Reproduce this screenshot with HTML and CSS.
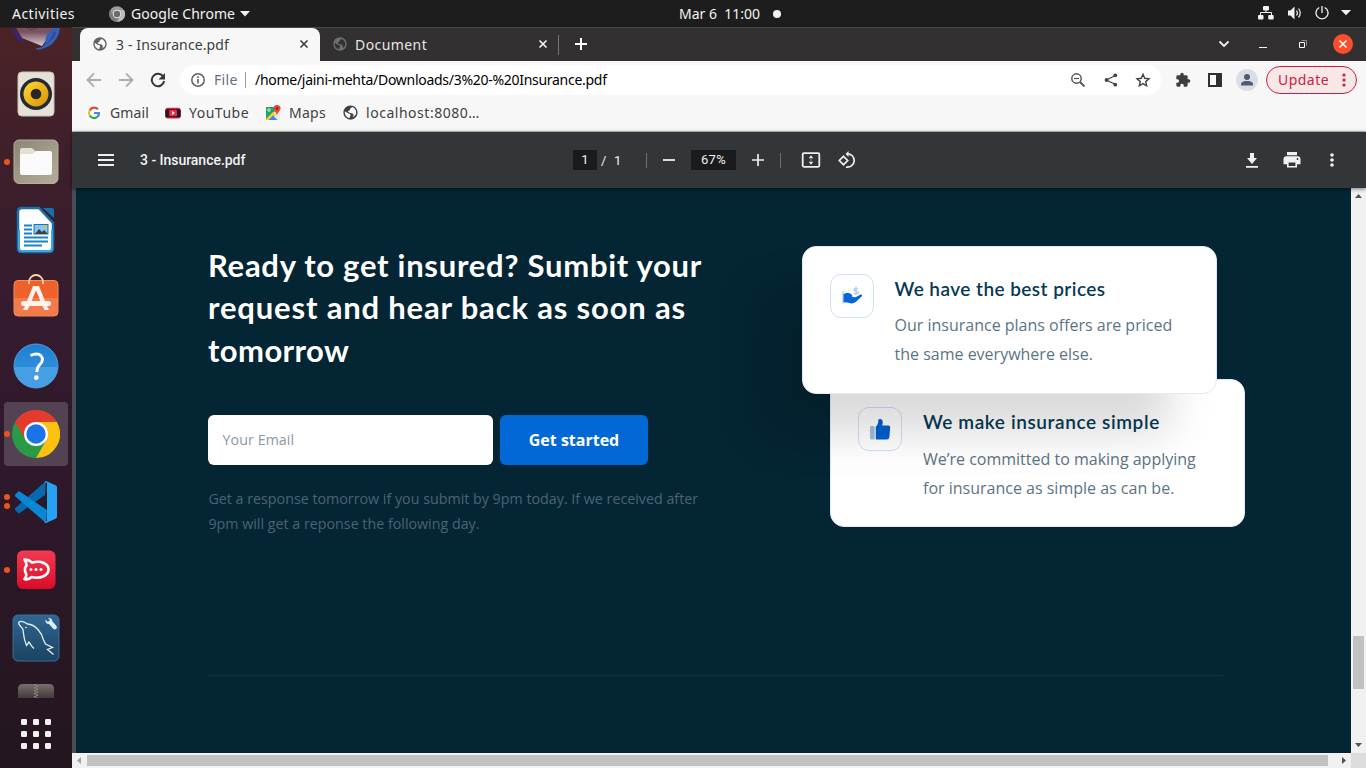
FILE: index.html
```html
<!DOCTYPE html>
<html lang="en">
<head>
<meta charset="utf-8">
<title>3 - Insurance.pdf</title>
<link rel="stylesheet" href="styles.css">
</head>
<body>
<svg width="0" height="0" class="defs">
  <defs>
    <linearGradient id="speaker" x1="0" y1="0" x2="1" y2="1"><stop offset="0" stop-color="#ffd92e"/><stop offset="1" stop-color="#d9900a"/></linearGradient>
    <linearGradient id="files" x1="0" y1="0" x2="1" y2="1"><stop offset="0" stop-color="#8e8674"/><stop offset="1" stop-color="#b3ad9c"/></linearGradient>
    <linearGradient id="bag" x1="0" y1="0" x2="0" y2="1"><stop offset=".5" stop-color="#f0602a"/><stop offset=".5" stop-color="#f27a4b"/></linearGradient>
    <linearGradient id="help" x1="0" y1="0" x2="0" y2="1"><stop offset="0" stop-color="#1e7fd2"/><stop offset=".53" stop-color="#2e8dda"/><stop offset=".53" stop-color="#479fe3"/></linearGradient>
    <linearGradient id="rocket" x1="0" y1="0" x2="0" y2="1"><stop offset="0" stop-color="#f23a52"/><stop offset="1" stop-color="#db0c28"/></linearGradient>
    <linearGradient id="mysql" x1="0" y1="0" x2="0" y2="1"><stop offset="0" stop-color="#2f6793"/><stop offset="1" stop-color="#1c4260"/></linearGradient>
    <linearGradient id="drive" x1="0" y1="0" x2="0" y2="1"><stop offset="0" stop-color="#77706b"/><stop offset="1" stop-color="#423a3c"/></linearGradient>
    <linearGradient id="bird" x1="0" y1="0" x2="0" y2="1"><stop offset=".3" stop-color="#7a5260"/><stop offset="1" stop-color="#d6ccd4"/></linearGradient>
    <symbol id="globe" viewBox="0 0 24 24"><path fill="currentColor" d="M12 2C6.480 2 2 6.480 2 12s4.480 10 10 10 10-4.480 10-10S17.520 2 12 2zm-1 17.930c-3.950-.49-7-3.850-7-7.930 0-.62.080-1.210.210-1.790L9 13.500c2 0 3 .6 3 2.300 0 1-.5 1.700-1 2.200v1.930zm3.200-1.400c2-.9 2.300-2.100 2-3.300-.5-1.700-2-2.700-4-2.700-1.500 0-3-.4-3.500-1.500-.4-1.300.6-2 2-2.100.8-.2.600-1.400.5-1.930C12.200 6 13 5.500 14.300 4.400c3.400 1 5.700 4.060 5.700 7.600 0 3.300-2 5.900-5.800 6.530z"/></symbol>
  </defs>
</svg>

<div class="desktop">
  <header class="topbar">
    <div class="topbar-left">
      <span class="activities">Activities</span>
      <svg class="chrome-mono" width="16" height="16" viewBox="0 0 16 16"><circle cx="8" cy="8" r="7.800" fill="#9a9a9a"/><path d="M8 4h7a7.800 7.800 0 0 1-7 11.800L11.500 10z" fill="#bcbcbc"/><path d="M4.500 10 1.300 4A7.800 7.800 0 0 0 8 15.800L10 11z" fill="#7d7d7d"/><circle cx="8" cy="8" r="4.200" fill="#e4e4e4"/><circle cx="8" cy="8" r="3.200" fill="#6b6b6b"/></svg>
      <span class="app-name">Google Chrome</span>
      <svg width="10" height="6" viewBox="0 0 10 6"><path d="M0 0h10L5 5.500z" fill="#f2f2f2"/></svg>
    </div>
    <div class="clock"><span class="clock-text">Mar 6&nbsp; 11:00</span><i class="clock-dot"></i></div>
    <div class="tray">
      <svg width="16" height="14" viewBox="0 0 16 14" fill="#f2f2f2"><rect x="5" y="0" width="6" height="4.500" rx="1"/><rect x="0" y="9" width="5.500" height="4.500" rx="1"/><rect x="10.200" y="9" width="5.500" height="4.500" rx="1"/><path d="M2.500 9V6.500h11V9M8 4v3" fill="none" stroke="#f2f2f2"/></svg>
      <svg width="16" height="14" viewBox="0 0 16 14"><path d="M1 4.500h2.500L7.500.500v13l-4-4H1z" fill="#f2f2f2"/><path d="M9.500 4.500q1.800 2.500 0 5M11.500 2.500q3.400 4.500 0 9" fill="none" stroke="#f2f2f2" stroke-width="1.200"/></svg>
      <svg width="14" height="14" viewBox="0 0 14 14"><path d="M4.300 1.500a6 6 0 1 0 5.400 0M7 0v7" fill="none" stroke="#f2f2f2" stroke-width="1.300"/></svg>
      <svg width="10" height="6" viewBox="0 0 10 6"><path d="M0 0h10L5 5.300z" fill="#f2f2f2"/></svg>
    </div>
  </header>

  <div class="main">
    <nav class="dock">
      <div class="dock-apps">
        <div class="app"><svg width="48" height="48" viewBox="0 0 48 48"><path d="M3 24h40l-8 13-5 7-20-8z" fill="url(#bird)"/><path d="M0 24c1 9 6 15 12 18l1-1C8 36 8 32 4 28z" fill="#33257c"/><path d="M48 24c0 12-8 22-23 24l-1-2c5 0 7-1 9-4l1-7c1-4 3-5 6-7l3-4z" fill="#2f62b8"/><path d="M42 29c-2 7-6 12-12 15 5-2 11-6 14-13z" fill="#4b3a9a"/><path d="m14 25 5 3 8-3" fill="none" stroke="#5e3c48"/></svg></div>
        <div class="app"><svg width="48" height="48" viewBox="0 0 48 48"><rect x="6" y="2" width="36" height="44" rx="4" fill="#e6e2d8" stroke="#c9c4b8"/><circle cx="24" cy="24" r="16" fill="#252a36"/><circle cx="24" cy="24" r="12.500" fill="url(#speaker)"/><circle cx="24" cy="24" r="5.300" fill="#272727"/></svg></div>
        <div class="app"><i class="dots one"></i><svg width="48" height="48" viewBox="0 0 48 48"><rect x="2" y="2" width="44" height="43.500" rx="5" fill="url(#files)" stroke="#b5ae9d"/><path d="M8 24V12q0-2 2-2h10l4 4v10z" fill="#e2dfd3"/><path d="M8 18q0-2 2-2h10l4-3h14q2 0 2 2v20q0 2-2 2H10q-2 0-2-2z" fill="#fafafa"/></svg></div>
        <div class="app"><svg width="48" height="48" viewBox="0 0 48 48"><path d="M10 2h17l14 15v25q0 4-4 4H10q-4 0-4-4V6q0-4 4-4z" fill="#fff" stroke="#1871aa" stroke-width="2.500"/><path d="M7 24v18q0 3 3 3h27q3 0 3-3V24" fill="none" stroke="#3ea4df" stroke-width="2"/><path d="M31 2h9q2 0 2 2v8z" fill="#1871aa"/><path d="M12 19.500h8M12 23.500h8M12 27.500h8M12 31.500h24M12 35.500h24M12 39.500h18" stroke="#1b83bd" stroke-width="2"/><rect x="22" y="18.500" width="14" height="9.500" fill="#80c8f2" stroke="#1b74aa"/><path d="m23 28 4-5 3 3 2-2 4 4z" fill="#404040"/><circle cx="33" cy="21" r="1.500" fill="#f0bd21"/></svg></div>
        <div class="app"><svg width="48" height="48" viewBox="0 0 48 48"><rect x="2" y="6.500" width="44" height="35.500" rx="4" fill="url(#bag)" stroke="#f58a5d"/><path d="M17 10V8a7 7 0 0 1 14 0v2" fill="none" stroke="#f4d5a4" stroke-width="1.800"/><path d="M21 12h6l6 15h3.500a2 2 0 0 1 0 5H35l2 4h-4.500l-2-4h-13l-2 4H11l2-4h-1.500a2 2 0 0 1 0-5H15zm3 4.500L19.500 27h9z" fill="#fff4ee"/></svg></div>
        <div class="app"><svg width="48" height="48" viewBox="0 0 48 48"><circle cx="24" cy="24" r="22" fill="url(#help)" stroke="#4ca0df"/><path d="M18.500 13.500q7-3.200 10.500.3c3 3.500 1.200 6.300-1.200 8.800-2.300 2-3 3.300-3 7.500" fill="none" stroke="#fff" stroke-width="2.800"/><circle cx="24.300" cy="35.700" r="2.400" fill="#fff"/></svg></div>
        <div class="app active"><i class="dots one"></i><svg width="48" height="48" viewBox="0 0 48 48"><circle cx="24" cy="24" r="24" fill="#2b9a47"/><path d="M3.200 12A24 24 0 0 1 44.800 12H24L13.600 30z" fill="#e53a2e"/><path d="M24 12h20.800A24 24 0 0 1 24 48l10.400-18z" fill="#fcc010"/><circle cx="24" cy="24" r="12" fill="#fff"/><circle cx="24" cy="24" r="9.700" fill="#1b73e8"/></svg></div>
        <div class="app"><i class="dots two"></i><svg width="48" height="48" viewBox="0 0 48 48"><path d="m34 3-1 14L8 34.800q-1 1-2 0L3.300 32q-1-1 0-2z" fill="#0969ae"/><path d="M3.300 18.500q-1-1 0-2L6 13.700q1-1 2 0L35 32l-1 13z" fill="#0a87d3"/><path d="m34 3 10 4.500q1 .5 1 2v29q0 1.500-1 2L34 45q-1.500 0-2-1l3-1V5l-3-1z" fill="#25a3f2"/></svg></div>
        <div class="app"><i class="dots one"></i><svg width="48" height="48" viewBox="0 0 48 48"><rect x="5" y="4.500" width="38.500" height="38.500" rx="6" fill="url(#rocket)"/><path d="M12.500 13.500c4 0 6 1.500 7.500 3 9.500-2.500 16.500 1.500 16.500 7s-7.500 10-17 7.500C17.500 33 15 34 12.500 33c2.500-2.500 2-4 1.500-5.500-1.500-2-1.500-6 .5-8-.5-2.500 0-4-2-6z" fill="none" stroke="#fff" stroke-width="2.600" stroke-linejoin="round"/><g fill="#fff"><circle cx="19" cy="23.500" r="1.500"/><circle cx="24" cy="23.500" r="1.500"/><circle cx="29" cy="23.500" r="1.500"/></g></svg></div>
        <div class="app"><svg width="48" height="48" viewBox="0 0 48 48"><rect x="1" y="1" width="46" height="46" rx="5" fill="url(#mysql)" stroke="#3a6f98"/><path d="M6.500 8.500c3-3 7 0 9 1.500 8 .5 14 8 16 16l2 4q4 2 7 3.500l-5 2 6 5M6.500 8.500c0 3 4 5 4.500 7 .5 4 .5 9 3.500 16l2.500-3.500C19 31 20 33 22 34.500" fill="none" stroke="#e5eff6" stroke-width="1.300"/><circle cx="14" cy="13.500" r=".8" fill="#fff"/><path d="M33.500 5.500 36 8l2-2-2-2q4-.5 4.500 3.500l4 4.500q1 2-.5 3t-3-.5l-4-4.500q-4 0-3.500-4.500z" fill="#dcebf6"/></svg></div>
        <div class="app"><svg width="48" height="48" viewBox="0 0 48 48"><rect x="6" y="2" width="36" height="44" rx="5" fill="#514a4b"/><path d="M6 16V7q0-5 5-5h26q5 0 5 5v9z" fill="url(#drive)"/><path d="M23 2v14M25 3.500v13" stroke="#8d8683" stroke-width="2" stroke-dasharray="1.500 1.500"/></svg></div>
      </div>
      <svg class="app-grid" width="32" height="32" viewBox="0 0 32 32" fill="#f1f0ee"><g id="r"><rect x="1" y="1" width="6" height="6" rx="1.300"/><rect x="13" y="1" width="6" height="6" rx="1.300"/><rect x="25" y="1" width="6" height="6" rx="1.300"/></g><use href="#r" y="12"/><use href="#r" y="24"/></svg>
    </nav>

    <section class="browser">
      <div class="tabs">
        <div class="tab current">
          <svg class="fav" width="16" height="16"><use href="#globe"/></svg>
          <span class="tab-title first">3 - Insurance.pdf</span>
          <svg class="x" width="10" height="10" viewBox="0 0 10 10"><path d="m1.500 1.500 7 7m0-7-7 7" stroke="#3c3c3c" stroke-width="1.600"/></svg>
        </div>
        <div class="tab">
          <svg class="fav" width="16" height="16"><use href="#globe"/></svg>
          <span class="tab-title second">Document</span>
          <svg class="x" width="10" height="10" viewBox="0 0 10 10"><path d="m1.500 1.500 7 7m0-7-7 7" stroke="#f4f4f4" stroke-width="1.600"/></svg>
        </div>
        <i class="tab-sep"></i>
        <svg class="plus" width="12" height="12" viewBox="0 0 12 12"><path d="M6 0v12M0 6h12" stroke="#fff" stroke-width="2"/></svg>
        <div class="window-buttons">
          <svg width="12" height="8" viewBox="0 0 12 8"><path d="m1.500 1.500 4.500 4.500 4.500-4.500" fill="none" stroke="#f2f2f2" stroke-width="1.800"/></svg>
          <svg width="8" height="10" viewBox="0 0 8 10"><path d="M0 8.500h8" stroke="#f2f2f2"/></svg>
          <svg width="8" height="8" viewBox="0 0 8 8"><path d="M2.500.5h5v5" fill="none" stroke="#8d8b8b"/><path d="M.5 2.500h5v5h-5z" fill="none" stroke="#fff"/></svg>
          <svg width="20" height="20" viewBox="0 0 20 20"><circle cx="10" cy="10" r="10" fill="#fb4e2b"/><path d="m6.500 6.500 7 7m0-7-7 7" stroke="#fff" stroke-width="1.500"/></svg>
        </div>
      </div>

      <div class="toolbar">
        <div class="nav-buttons">
          <svg width="16" height="16" viewBox="0 0 16 16" fill="none" stroke="#adadad" stroke-width="1.800"><path d="M15 8H2M8 1.500 1.500 8 8 14.500"/></svg>
          <svg width="16" height="16" viewBox="0 0 16 16" fill="none" stroke="#adadad" stroke-width="1.800"><path d="M1 8h13M8 1.500 14.500 8 8 14.500"/></svg>
          <svg width="16" height="16" viewBox="0 0 16 16"><path d="M13.300 4.800A6.200 6.200 0 1 0 14.100 9" fill="none" stroke="#363636" stroke-width="2"/><path d="M15 1v6.500H8.500z" fill="#363636"/></svg>
        </div>
        <div class="omnibox">
          <svg width="14" height="14" viewBox="0 0 14 14"><circle cx="7" cy="7" r="6.200" fill="none" stroke="#5f6368" stroke-width="1.500"/><path d="M7 6v4.500M7 3.200v1.700" stroke="#5f6368" stroke-width="1.600"/></svg>
          <span class="scheme">File</span><i class="scheme-sep"></i>
          <span class="url">/home/jaini-mehta/Downloads/3%20-%20Insurance.pdf</span>
          <div class="omni-icons">
            <svg width="14" height="14" viewBox="0 0 14 14" fill="none" stroke="#505050"><circle cx="5.500" cy="5.500" r="4.700" stroke-width="1.400"/><path d="m9 9 4.500 4.500" stroke-width="1.800"/><path d="M3 5.500h5" stroke-width="1.200"/></svg>
            <svg width="14" height="14" viewBox="0 0 14 14" fill="#454545"><path d="M11.500 2.500 2.500 7l9 4.500" fill="none" stroke="#454545" stroke-width="1.300"/><circle cx="11.300" cy="2.300" r="1.900"/><circle cx="2.500" cy="7" r="1.900"/><circle cx="11.300" cy="11.700" r="1.900"/></svg>
            <svg width="16" height="16" viewBox="0 0 16 16"><path d="m8 2.300 1.700 4 4.300.4-3.300 2.900 1 4.200L8 11.600l-3.700 2.200 1-4.200L2 6.700l4.300-.4z" fill="none" stroke="#454545" stroke-width="1.400"/></svg>
          </div>
        </div>
        <svg class="puzzle" width="16" height="16" viewBox="0 0 24 24" fill="#3e3e3e"><path d="M20.500 11H19V7a2 2 0 0 0-2-2h-4V3.500a2.500 2.500 0 0 0-5 0V5H4a2 2 0 0 0-2 2v3.800h1.500a2.700 2.700 0 0 1 0 5.400H2V20a2 2 0 0 0 2 2h3.800v-1.500a2.700 2.700 0 0 1 5.400 0V22H17a2 2 0 0 0 2-2v-4h1.500a2.500 2.500 0 0 0 0-5z"/></svg>
        <svg class="panel" width="14" height="14" viewBox="0 0 14 14"><path d="M0 0h14v14H0zM2 2v10h6V2z" fill="#303030" fill-rule="evenodd"/></svg>
        <svg class="avatar" width="22" height="22" viewBox="0 0 22 22"><circle cx="11" cy="11" r="11" fill="#dbdfe4"/><circle cx="11" cy="8" r="3" fill="#4c5d73"/><path d="M5 16.500v-1.300C5 12.500 9 12 11 12s6 .5 6 3.200v1.300z" fill="#4c5d73"/></svg>
        <div class="update"><span>Update</span><svg width="4" height="14" viewBox="0 0 4 14" fill="#db1535"><circle cx="2" cy="2" r="1.600"/><circle cx="2" cy="7" r="1.600"/><circle cx="2" cy="12" r="1.600"/></svg></div>
      </div>

      <div class="bookmarks">
        <svg class="bm-icon" width="16" height="16" viewBox="0 0 16 16"><circle cx="8" cy="8" r="8" fill="#fff"/><g fill="none" stroke-width="2.200"><path d="M12 4.300A5 5 0 0 0 3.700 5.500" stroke="#ea4335"/><path d="M3.700 5.500a5 5 0 0 0 0 5" stroke="#fbbc05"/><path d="M3.700 10.500a5 5 0 0 0 7.700 1.300" stroke="#34a853"/><path d="M8 8h5a5 5 0 0 1-1.600 3.800" stroke="#4285f4"/></g></svg>
        <span class="bm gmail">Gmail</span>
        <svg class="bm-icon" width="16" height="16" viewBox="0 0 16 16"><rect x=".3" y="2.800" width="15.400" height="10.700" rx="2.500" fill="#e0213a"/><rect x=".3" y="4.200" width="15.400" height="8" rx="1.500" fill="#1c1b2e"/><rect x="4" y="5" width="8" height="6.200" rx="1" fill="#f0283f"/><path d="M7 6v4l3-2z" fill="#fff"/></svg>
        <span class="bm youtube">YouTube</span>
        <svg class="bm-icon" width="16" height="16" viewBox="0 0 16 16"><path d="M1 2h9l5 6v7H1z" fill="#e9ecef"/><path d="M1 2h8.500L10 6l-9 9z" fill="#1fa463"/><path d="m1 14 7-7 3 3-5 5H1z" fill="#fbcf31"/><path d="m3.500 15 4.500-4.500 4.500 4.500z" fill="#4285f4"/><path d="M12 0a3.600 3.600 0 0 1 3.600 3.600C15.600 6 12.500 7 12 10.500 11.500 7 8.400 6 8.400 3.600A3.600 3.600 0 0 1 12 0z" fill="#e8453c"/><circle cx="12" cy="3.500" r="1.200" fill="#8d1f17"/><circle cx="4" cy="5" r="1.300" fill="none" stroke="#fff" stroke-width=".8"/></svg>
        <span class="bm maps">Maps</span>
        <svg class="bm-icon dark" width="17" height="17"><use href="#globe"/></svg>
        <span class="bm localhost">localhost:8080…</span>
      </div>

      <div class="pdf-toolbar">
        <svg class="burger" width="16" height="12" viewBox="0 0 16 12"><path d="M0 1h16M0 6h16M0 11h16" stroke="#f1f1f1" stroke-width="2"/></svg>
        <span class="pdf-title">3 - Insurance.pdf</span>
        <div class="pdf-center">
          <span class="page-now">1</span><span class="page-total">/ &nbsp;1</span>
          <i class="bar first-bar"></i>
          <svg class="minus" width="12" height="12" viewBox="0 0 12 12"><path d="M0 6h12" stroke="#eee" stroke-width="1.800"/></svg>
          <span class="zoom">67%</span>
          <svg class="zoom-in" width="12" height="12" viewBox="0 0 12 12"><path d="M6 0v12M0 6h12" stroke="#eee" stroke-width="1.700"/></svg>
          <i class="bar"></i>
          <svg class="fit" width="20" height="16" viewBox="0 0 20 16"><rect x="1.700" y="1.200" width="16.600" height="13.600" rx="1.200" fill="none" stroke="#eee" stroke-width="1.800"/><path d="m10 3.300 2.300 2.900H7.700zM10 12.700l2.300-2.900H7.700zM9.500 7.500h1v1h-1z" fill="#eee"/></svg>
          <svg class="rotate" width="18" height="18" viewBox="0 0 18 18" fill="none" stroke="#eee" stroke-width="1.700"><path d="m5.500 5.300 4.200 4.200-4.200 4.200-4.200-4.200z"/><path d="M9 2.800a6.700 6.700 0 1 1-1 13.200"/><path d="M10.500 0 7.500 2.900l3 3z" fill="#eee" stroke="none"/></svg>
        </div>
        <div class="pdf-actions">
          <svg width="12" height="15" viewBox="0 0 12 15" fill="#f1f1f1"><path d="M4 0h4v5h3l-5 6-5-6h3zM0 13h12v1.800H0z"/></svg>
          <svg width="18" height="16" viewBox="0 0 18 16" fill="#f1f1f1"><path d="M4 0h10v3.300H4zM3.500 4.300h11a3 3 0 0 1 3 3v5H14V9H4v3.300H.5v-5a3 3 0 0 1 3-3z"/><path d="M4.800 9.800h8.400v5H4.800z" fill="none" stroke="#f1f1f1" stroke-width="1.600"/><circle cx="14.500" cy="7" r=".9" fill="#323639"/></svg>
          <svg width="4" height="14" viewBox="0 0 4 14" fill="#f1f1f1"><circle cx="2" cy="2" r="1.800"/><circle cx="2" cy="7" r="1.800"/><circle cx="2" cy="12" r="1.800"/></svg>
        </div>
      </div>

      <div class="viewer">
        <div class="page">
          <div class="page-grid">
            <div class="signup">
              <h1><span class="h-a">Ready to get insured? Sumbit your</span><br><span class="h-b">request and hear back as soon as</span><br><span class="h-c">tomorrow</span></h1>
              <div class="form"><div class="field">Your Email</div><div class="button">Get started</div></div>
              <p class="note">Get a response tomorrow if you submit by 9pm today. If we received after<br>9pm will get a reponse the following day.</p>
            </div>
            <div class="cards">
              <article class="card front">
                <div class="badge"><svg width="22" height="22" viewBox="0 0 22 22"><path d="M2 6v13" stroke="#abcdf2" stroke-width="1.300"/><path d="M17 4.300c-.5-1-4-1.200-4 .5 0 1.800 4.200.8 4.200 2.700 0 1.700-3.700 1.600-4.500.3M15 1.600v8.300" fill="none" stroke="#abcdf2" stroke-width="1.300"/><path d="M2.500 9.200C5 7.500 9 7.500 10.500 9.500c1 1.200.8 2 .6 2.500l3.500.3 4.500-2.600c1.800-.6 2.500.6 1.600 1.800l-6 5.500q-2.500 2-5 1.300L6 17.500l-3.500-.3z" fill="#0268d9"/></svg></div>
                <div class="copy"><h2 class="prices">We have the best prices</h2><p>Our insurance plans offers are priced<br>the same everywhere else.</p></div>
              </article>
              <article class="card back">
                <div class="badge"><svg width="22" height="22" viewBox="0 0 22 22"><rect x="1" y="8" width="4.700" height="13.500" rx="1.500" fill="#9fbfe3"/><path d="M6.800 8.500C9 7.500 9.200 4 9.400 2c.2-1.500 3.600-1.200 4.200 1 .5 2-.2 3.300-.4 4.500h6q2.200 0 2 2l-.8 9.500q-.3 2.500-2.600 2.500h-11z" fill="#0060ce"/></svg></div>
                <div class="copy"><h2 class="simple">We make insurance simple</h2><p>We’re committed to making applying<br>for insurance as simple as can be.</p></div>
              </article>
            </div>
          </div>
          <hr class="rule">
        </div>
        <div class="vscroll">
          <svg width="7" height="4" viewBox="0 0 7 4"><path d="M0 4h7L3.500 0z" fill="#505050"/></svg>
          <i class="vthumb"></i>
          <svg width="7" height="4" viewBox="0 0 7 4"><path d="M0 0h7L3.500 4z" fill="#505050"/></svg>
        </div>
        <div class="hscroll">
          <svg width="4" height="7" viewBox="0 0 4 7"><path d="M4 0v7L0 3.500z" fill="#a3a3a3"/></svg>
          <i class="hthumb"></i>
          <svg width="4" height="7" viewBox="0 0 4 7"><path d="M0 0v7l4-3.500z" fill="#505050"/></svg>
        </div>
        <i class="corner"></i>
      </div>
    </section>
  </div>
</div>
</body>
</html>
```
FILE: styles.css
```css
*{box-sizing:border-box}
body{margin:0;overflow:hidden;font-family:"Noto Sans","Open Sans",sans-serif}
svg{display:block;flex:none}
h1,h2,p{margin:0}
.defs{position:absolute}
.desktop{width:1366px;height:768px;display:flex;flex-direction:column}

/* system bar */
.topbar{height:27px;flex:none;background:#1d1d1d;color:#f2f2f2;display:grid;grid-template-columns:679px 108px 1fr;align-items:center;font-size:14px;white-space:nowrap}
.topbar-left{display:flex;align-items:center;padding-left:12px}
.activities{width:97px;letter-spacing:.47px}
.chrome-mono{margin-right:6px}
.app-name{width:109px;letter-spacing:.05px}
.clock{display:flex;align-items:center}
.clock-text{width:94px}
.clock-dot{width:8px;height:8px;border-radius:50%;background:#f2f2f2}
.tray{display:flex;align-items:center;justify-content:flex-end;gap:12px;padding-right:15px}
.tray svg{margin-top:-1px}
.tray svg:nth-child(2){margin-left:1px}

.main{flex:1;display:flex;min-height:0}

/* dock */
.dock{width:72px;flex:none;overflow:hidden;display:flex;flex-direction:column;align-items:center;background:linear-gradient(#4c2326 0,#40202a 110px,#371c2e 240px,#2d182a 480px,#23161f 741px)}
.dock-apps{width:72px;height:671px;overflow:hidden;flex:none;border-top:1px solid #3b1b1d}
.app{height:68px;position:relative;display:flex;align-items:center;justify-content:center}
.app:first-child{margin-top:-36px}
.app.active::before{content:"";position:absolute;inset:2px 4px;background:#534252;border-radius:4px}
.app svg{position:relative}
.dots{position:absolute;left:4px;top:31px;width:6px;height:6px;border-radius:50%;background:#ea5420;z-index:1}
.dots.two{top:26px;box-shadow:0 9px #ea5420}
.app-grid{margin-top:20px}

/* browser window */
.browser{width:1294px;display:flex;flex-direction:column}
.tabs{height:34px;flex:none;background:#333031;border-top:1px solid #4a4848;display:flex;align-items:center;padding-left:8px}
.tab{width:240px;height:33px;display:flex;align-items:center;padding:0 0 1px 12px;color:#e6e6e6;font-size:14px}
.tab.current{background:#f7f7f7;color:#3e3e3e;border-radius:8px 8px 0 0}
.tab .fav{color:#6b7074;margin-right:8px}
.tab.current .fav{color:#5f6368}
.tab-title{width:183px;white-space:nowrap}
.tab-title.first{letter-spacing:.12px}
.tab-title.second{letter-spacing:.42px;margin-left:-1px}
.tab-sep{width:1px;height:20px;background:#767474;margin:0 16px 0 -2px}
.plus,.window-buttons{margin-bottom:1px}
.window-buttons{margin-left:auto;padding-right:13px;display:flex;align-items:center;gap:31px}
.window-buttons svg:nth-child(1){margin-right:1px}
.window-buttons svg:nth-child(2){margin:0 1px 0 -3px}
.window-buttons svg:nth-child(4){margin-left:-5px}

.toolbar{height:37px;flex:none;background:#f7f7f7;display:flex;align-items:center;padding:1px 9px 0 14px}
.nav-buttons{display:flex;gap:16px;width:94px}
.omnibox{width:981px;height:30px;border-radius:15px;background:#fff;display:flex;align-items:center;padding-left:11px;font-size:14px;color:#000}
.scheme{margin:-2px 0 0 9px;width:31px;color:#5f6f84;letter-spacing:.35px}
.scheme-sep{width:1px;height:16px;background:#9a9da1;margin-right:9px}
.url{margin-top:-2px;letter-spacing:-.285px;white-space:nowrap}
.omni-icons{margin-left:auto;padding-right:10px;display:flex;gap:17px;align-items:center}
.omni-icons svg:nth-child(2){margin-left:2px}
.puzzle{margin-left:14px}
.panel{margin-left:17px}
.avatar{margin-left:14px}
.update{margin-left:8px;width:91px;height:28px;border:1px solid #d8193c;border-radius:14px;background:#f5e8e7;color:#d0213f;font-size:14px;letter-spacing:.46px;display:flex;align-items:center;padding-left:11px}
.update svg{margin-left:13px}
.update span{margin-top:-2px}

.bookmarks{height:34px;flex:none;background:#f7f7f7;border-bottom:1px solid #bcc1be;display:flex;align-items:center;padding:0 0 4px 14px;font-size:14px;color:#414141;white-space:nowrap}
.bm-icon{margin-right:8px}
.bm.gmail{width:55px;letter-spacing:.13px}
.bm.youtube{width:76px;letter-spacing:.49px}
.bm.maps{width:53px;letter-spacing:.28px}
.bm.localhost{letter-spacing:.53px}
.bm-icon.dark{color:#3c4043;margin-right:7px}

/* document toolbar */
.pdf-toolbar{height:56px;flex:none;background:#323639;color:#f1f1f1;display:grid;grid-template-columns:68px 433px 1fr auto;align-items:center;position:relative;z-index:2;box-shadow:0 1px 4px rgba(0,0,0,.5);font-family:Roboto,sans-serif}
.burger{margin-left:26px}
.pdf-title{font-size:14px;font-weight:500;letter-spacing:-.03px}
.pdf-center{display:flex;align-items:center;font-size:13px}
.page-now{width:24px;height:20px;line-height:20px;text-align:center;background:#191b1c}
.page-total{width:49px;padding-left:4px;white-space:nowrap;letter-spacing:.4px}
.bar{width:1px;height:15px;background:#6d7072}
.first-bar{margin-right:16px}
.zoom{margin:0 16px;width:45px;height:20px;line-height:20px;text-align:center;background:#191b1c;letter-spacing:.25px}
.zoom-in{margin-right:16px}
.fit{margin:0 17px 0 20px}
.pdf-actions{display:flex;align-items:center;padding-right:32px}
.pdf-actions svg{margin-left:29px}
.pdf-actions svg:nth-child(2){margin:0 0 0 25px}

/* document */
.viewer{flex:1;min-height:0;display:grid;grid-template-columns:1279px 15px;grid-template-rows:565px 15px}
.page{background:#042534;border-left:4px solid #474d51;padding:58px 0 0 132px;overflow:hidden}
.page-grid{display:grid;grid-template-columns:593.500px 444px;height:429px}
h1{font:700 31px/42.700px Lato,sans-serif;color:#fff;margin-top:-2.500px;white-space:nowrap}
.h-a{letter-spacing:.72px}
.h-b{letter-spacing:.83px}
.h-c{letter-spacing:.4px}
.form{display:flex;gap:7px;margin-top:43.500px}
.field{width:285px;height:49.500px;background:#fff;border-radius:6px;padding-left:14.500px;font:14.200px/49px "Open Sans",sans-serif;letter-spacing:.1px;color:#8799a6}
.button{width:148px;height:49.500px;background:#0268d6;border-radius:6px;text-align:center;color:#fff;font:700 16px/50px "Open Sans",sans-serif}
.note{margin:21.500px 0 0 .4px;font:14.270px/25px "Open Sans",sans-serif;color:#4b6474;white-space:nowrap}
.card{width:415px;height:148px;border:1px solid #e3eaf5;border-radius:14px;background:#fff;display:flex;padding:27px 0 0 27px}
.front{position:relative;z-index:1;box-shadow:-44px 42px 46px -3px rgba(0,0,0,.15)}
.back{margin:-15px 0 0 28.500px}
.badge{width:44px;height:44px;flex:none;border:1px solid #cfe1f5;border-radius:11px;display:flex;align-items:center;justify-content:center}
.copy{margin-left:21px;white-space:nowrap}
.copy h2{font:600 19px/30px Lato,sans-serif;color:#063a55}
.prices{letter-spacing:.44px}
.copy .simple{letter-spacing:.6px}
.copy p{margin-top:7px;font:16px/28.500px "Open Sans",sans-serif;color:#5b7486}
.back .copy p{margin-top:8px}
.rule{width:1015px;height:1px;border:0;margin:0;background:#15313f}

/* scrollbars */
.vscroll{background:#f1f1f1;display:flex;flex-direction:column;align-items:center;padding:6px 0}
.vthumb{width:11px;height:53px;background:#c1c1c1;margin:438px 0 54px}
.hscroll{background:#f1f1f1;display:flex;align-items:center;padding-left:5px}
.hthumb{width:1241px;height:11px;background:#c1c1c1;margin:0 14px 0 6px}
.corner{background:#dcdcdc}
```
